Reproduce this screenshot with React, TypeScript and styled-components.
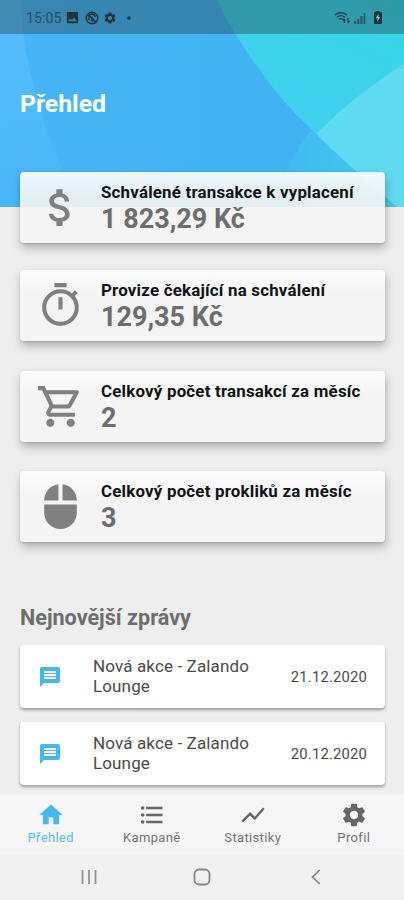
import React from "react";
import styled, { createGlobalStyle } from "styled-components";
import {
  MdAttachMoney,
  MdFormatListBulleted,
  MdHome,
  MdImage,
  MdMessage,
  MdMouse,
  MdOutlineShoppingCart,
  MdOutlineTimer,
  MdSettings,
  MdShowChart,
} from "react-icons/md";
import type { IconType } from "react-icons";

const Global = createGlobalStyle`
  * { box-sizing: border-box; }
  body { margin: 0; background: #eeeeee; }
`;

const Screen = styled.div`
  display: flex;
  flex-direction: column;
  width: 404px;
  height: 900px;
  overflow: hidden;
  background: #eeeeee;
  font-family: Roboto, sans-serif;
`;

const Hero = styled.header`
  position: relative;
  flex: none;
  height: 207px;
`;

const HeroArt = styled.svg`
  position: absolute;
  inset: 0;
`;

const StatusBar = styled.div`
  position: relative;
  display: flex;
  align-items: center;
  height: 34px;
  padding: 1px 20px 0 26px;
  background: rgba(33, 57, 67, 0.38);
  color: #20323d;
`;

const Clock = styled.span`
  width: 39px;
  font-size: 14.3px;
  color: #2c4d60;
`;

const StatusGroup = styled.div<{ $gap: number; $push?: boolean }>`
  display: flex;
  align-items: center;
  gap: ${(p) => p.$gap}px;
  margin-left: ${(p) => (p.$push ? "auto" : "0")};
`;

const Title = styled.h1`
  position: relative;
  margin: 55px 0 0 20px;
  font-size: 24.8px;
  line-height: 30px;
  font-weight: 700;
  color: #fff;
`;

const Content = styled.main`
  position: relative;
  flex: 1;
  min-height: 0;
  padding: 0 19px 0 20px;
  margin-top: -35px;
`;

const StatList = styled.div`
  display: flex;
  flex-direction: column;
`;

const StatCard = styled.section<{ $after: number }>`
  display: flex;
  align-items: center;
  height: 71px;
  margin-bottom: ${(p) => p.$after}px;
  padding: 0 16px;
  border-radius: 4px;
  background: linear-gradient(rgba(255, 255, 255, 0.9), rgba(245, 245, 245, 0.9) 35%, rgba(245, 245, 245, 0.9));
  box-shadow: 1px 5px 10px rgba(0, 0, 0, 0.26), 0 1px 2px rgba(0, 0, 0, 0.14);
  color: #808080;
`;

const StatText = styled.div`
  display: flex;
  flex-direction: column;
  margin-left: 16px;
  padding-top: 1px;
`;

const StatLabel = styled.span`
  font-size: 16.9px;
  line-height: 22px;
  letter-spacing: 0.2px;
  font-weight: 700;
  white-space: nowrap;
  color: #101214;
`;

const StatValue = styled.span`
  font-size: 27px;
  line-height: 33px;
  font-weight: 700;
  color: #6d6d6d;
`;

const NewsTitle = styled.h2`
  margin: 61px 0 12px;
  font-size: 21.6px;
  line-height: 30px;
  font-weight: 700;
  color: #6d6d6d;
`;

const NewsList = styled.div`
  display: grid;
  row-gap: 14px;
`;

const NewsCard = styled.article`
  display: flex;
  align-items: center;
  height: 63px;
  padding: 0 18px 0 17.5px;
  border-radius: 4px;
  background: #fff;
  box-shadow: 0 2px 3px rgba(0, 0, 0, 0.34);
  color: #43b8ee;
`;

const NewsText = styled.p`
  width: 180px;
  margin: 0 0 1px 31.5px;
  font-size: 17px;
  line-height: 20.5px;
  letter-spacing: 0.13px;
  color: #4a4a4a;
`;

const NewsDate = styled.time`
  margin-left: auto;
  font-size: 14.8px;
  letter-spacing: 0.18px;
  color: #4a4a4a;
`;

const TabBar = styled.nav`
  position: relative;
  display: grid;
  grid-template-columns: repeat(4, 1fr);
  flex: none;
  height: 61px;
  background: #f6f6f6;
`;

const Tab = styled.a<{ $active?: boolean }>`
  display: flex;
  flex-direction: column;
  align-items: center;
  padding: 7px 0 0 0.5px;
  color: ${(p) => (p.$active ? "#45b9ee" : "#666666")};
`;

const TabLabel = styled.span`
  font-size: 13px;
  line-height: 18px;
  letter-spacing: 0.35px;
  opacity: 0.9;
`;

const SystemBar = styled.div`
  display: grid;
  grid-template-columns: 113px 113px 115px;
  justify-content: center;
  align-items: center;
  justify-items: center;
  flex: none;
  height: 45px;
  padding: 0 0 1px 2px;
  background: #f1f1f1;
`;

const stats: { icon: IconType; label: string; value: string; after: number }[] = [
  { icon: MdAttachMoney, label: "Schválené transakce k vyplacení", value: "1 823,29 Kč", after: 27 },
  { icon: MdOutlineTimer, label: "Provize čekající na schválení", value: "129,35 Kč", after: 30 },
  { icon: MdOutlineShoppingCart, label: "Celkový počet transakcí za měsíc", value: "2", after: 29 },
  { icon: MdMouse, label: "Celkový počet prokliků za měsíc", value: "3", after: 0 },
];

const news = [
  { text: "Nová akce - Zalando Lounge", date: "21.12.2020" },
  { text: "Nová akce - Zalando Lounge", date: "20.12.2020" },
];

const tabs: { icon: IconType; label: string; active?: boolean }[] = [
  { icon: MdHome, label: "Přehled", active: true },
  { icon: MdFormatListBulleted, label: "Kampaně" },
  { icon: MdShowChart, label: "Statistiky" },
  { icon: MdSettings, label: "Profil" },
];

function Backdrop() {
  return (
    <HeroArt width="404" height="207" viewBox="0 0 404 207">
      <defs>
        <linearGradient id="teal" x1="0" y1="1" x2="1" y2="0">
          <stop offset="0" stopColor="#45c8f4" />
          <stop offset="0.55" stopColor="#42d0f0" />
          <stop offset="1" stopColor="#35d7e6" />
        </linearGradient>
        <linearGradient id="blue" x1="0" y1="0" x2="1" y2="0">
          <stop offset="0" stopColor="#47b5f7" />
          <stop offset="1" stopColor="#3eb2f1" />
        </linearGradient>
        <linearGradient id="edge" x1="0" y1="0" x2="0" y2="1">
          <stop offset="0" stopColor="#5cc1fc" stopOpacity="0.75" />
          <stop offset="1" stopColor="#5cc1fc" stopOpacity="0.1" />
        </linearGradient>
        <linearGradient id="overlap" gradientUnits="userSpaceOnUse" x1="285" y1="0" x2="390" y2="0">
          <stop offset="0" stopColor="#42b9f1" />
          <stop offset="1" stopColor="#3fcbee" />
        </linearGradient>
      </defs>
      <rect width="404" height="207" fill="url(#teal)" />
      <path d="M404 64Q356 94 320 130Q290 161 272 207H404Z" fill="#60dbf2" />
      <path d="M0 0H217Q236 39 262 73Q282 102 312 130Q352 170 404 213H0Z" fill="url(#blue)" />
      <path d="M312 130Q286 161 270 207H396Q350 168 312 130Z" fill="url(#overlap)" />
      <path d="M0 0H21Q22 48 36 95Q48 145 80 207H0Z" fill="url(#edge)" />
    </HeroArt>
  );
}

function StatusIcons() {
  return (
    <>
      <StatusGroup $gap={4.5}>
        <MdImage size={15} />
        <svg width="14" height="14" viewBox="0 0 14 14" fill="none" stroke="currentColor" strokeWidth="1.4">
          <circle cx="7" cy="7" r="5.8" />
          <path d="M4 9V6a3 3 0 0 1 6 0M3 3.5l8.5 8M6 6l4 4M6 8.5l2 2" />
        </svg>
        <MdSettings size={14} />
        <svg width="14" height="6" viewBox="0 0 14 6" fill="currentColor">
          <circle cx="7" cy="3" r="1.8" />
        </svg>
      </StatusGroup>
      <StatusGroup $gap={4} $push>
        <svg width="16" height="14" viewBox="0 0 16 14" fill="none" stroke="currentColor" strokeWidth="1.3" opacity="0.85">
          <path d="M1 4Q7 -.5 13 4M3 6.2Q7 3 11 6.2M5 8.4Q7 6.8 9 8.4M10.5 12V8M9 9.5l1.5-1.6M14 7v4.5M14 12l1.5-1.8" />
        </svg>
        <svg width="12" height="12" viewBox="0 0 12 12" fill="currentColor" opacity="0.65">
          <path d="M0 9h2v3H0zM3.2 7h2v5h-2zM6.4 4h2v8h-2zM9.6 1h1.6v11H9.6z" />
        </svg>
        <svg width="14" height="13" viewBox="0 0 14 13">
          <path d="M5.5 1V0h4v1H11a1 1 0 0 1 1 1v10a1 1 0 0 1-1 1H5a1 1 0 0 1-1-1V2a1 1 0 0 1 1-1z" fill="currentColor" />
          <path d="M8.8 2.5L5.8 7.2h2L7 11l3.2-5H8.3z" fill="#7fd0cc" />
        </svg>
      </StatusGroup>
    </>
  );
}

export default function App() {
  return (
    <Screen>
      <Global />
      <Hero>
        <Backdrop />
        <StatusBar>
          <Clock>15:05</Clock>
          <StatusIcons />
        </StatusBar>
        <Title>Přehled</Title>
      </Hero>
      <Content>
        <StatList>
          {stats.map(({ icon: Icon, label, value, after }) => (
            <StatCard key={label} $after={after}>
              <Icon size={49} />
              <StatText>
                <StatLabel>{label}</StatLabel>
                <StatValue>{value}</StatValue>
              </StatText>
            </StatCard>
          ))}
        </StatList>
        <NewsTitle>Nejnovější zprávy</NewsTitle>
        <NewsList>
          {news.map((item) => (
            <NewsCard key={item.date}>
              <MdMessage size={24} />
              <NewsText>{item.text}</NewsText>
              <NewsDate>{item.date}</NewsDate>
            </NewsCard>
          ))}
        </NewsList>
      </Content>
      <TabBar>
        {tabs.map(({ icon: Icon, label, active }) => (
          <Tab key={label} $active={active}>
            <Icon size={28} />
            <TabLabel>{label}</TabLabel>
          </Tab>
        ))}
      </TabBar>
      <SystemBar>
        <svg width="16" height="16" viewBox="0 0 16 16" stroke="#929292" strokeWidth="1.8">
          <path d="M1.5 1v14M8 1v14M14.5 1v14" />
        </svg>
        <svg width="18" height="18" viewBox="0 0 18 18" fill="none" stroke="#858585" strokeWidth="1.8">
          <rect x="1.5" y="1.5" width="15" height="15" rx="4.5" />
        </svg>
        <svg width="10" height="16" viewBox="0 0 10 16" fill="none" stroke="#858585" strokeWidth="1.7">
          <path d="M8.8 1L1.5 8l7.3 7" />
        </svg>
      </SystemBar>
    </Screen>
  );
}
